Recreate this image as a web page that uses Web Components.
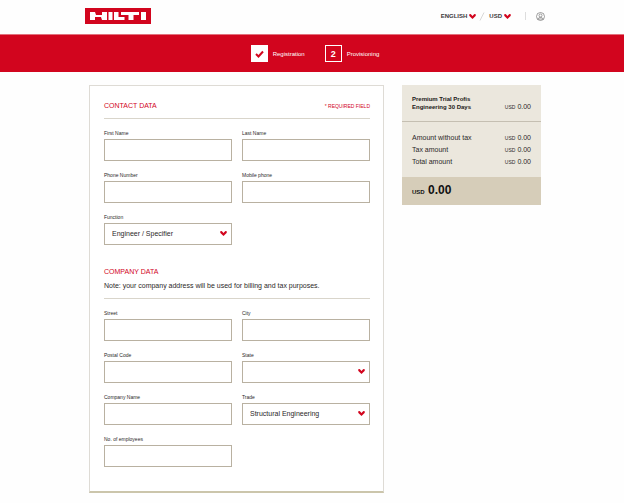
<!DOCTYPE html>
<html lang="en">
<head>
<meta charset="utf-8">
<title>Hilti – Registration</title>
<style>
html{background:#fefefe}
body{margin:0;font-family:"Liberation Sans",Arial,sans-serif;font-size:7px;line-height:12px;color:#2b2829}
</style>
</head>
<body>
<registration-page></registration-page>
<script>
const define = (name, html, setup) => customElements.define(name, class extends HTMLElement {
  connectedCallback() {
    if (this.shadowRoot) return;
    const t = document.createElement('template');
    t.innerHTML = html;
    this.attachShadow({mode: 'open'}).append(t.content.cloneNode(true));
    if (setup) setup(this, this.shadowRoot);
  }
});

define('chevron-icon', `<style>:host{display:block;width:7px;height:5px}svg{display:block;width:100%;height:100%}</style>
<svg viewBox="0 0 14 10" aria-hidden="true"><path d="M0 1.2 3.4 0 7 3.8 10.6 0 14 1.2 13.2 4 7 10 .8 4Z" fill="#d2051e"/></svg>`);

define('brand-logo', `<style>:host{display:block}a{display:block}svg{display:block;width:66px;height:16px}</style>
<a href="#" aria-label="Hilti"><svg viewBox="0 0 66 16"><path fill="#d2051e" d="M0 0h66v16H0z"/>
<path fill="#fff" d="M5 4h5l1 3h6V4h5v8h-5l-1-3h-6v3H5zM23.500 4h4v8h-4zM29 4h4.500v5h6v3H29zM36 4h18v3h-5.500v5h-5V7H36zM56 4h5v8h-5z"/></svg></a>`);

define('menu-button', `<style>:host{display:block}
button{display:flex;align-items:center;gap:2px;padding:0;border:0;background:none;font:bold 6px/12px "Liberation Sans",Arial,sans-serif;color:#3c393a}</style>
<button type="button" aria-haspopup="true"><slot></slot><chevron-icon></chevron-icon></button>`);

define('site-header', `<style>
:host{display:block;background:#fefefe}
header{display:flex;align-items:center;justify-content:space-between;height:34px;padding:0 79px 2px 85px;box-sizing:border-box}
nav{display:flex;align-items:center}
.slash{width:13px;height:9px}
.bar{width:1px;height:8px;background:#ddd;margin:0 10px 0 14px}
button{padding:0;border:0;background:none;display:block}
button svg{display:block;width:9px;height:9px}
</style>
<header><brand-logo></brand-logo>
<nav aria-label="Preferences"><menu-button>ENGLISH</menu-button>
<svg class="slash" viewBox="0 0 13 9" aria-hidden="true"><path d="M4 8.500 8 .5" stroke="#d8d8d8" fill="none"/></svg>
<menu-button>USD</menu-button><span class="bar"></span>
<button type="button" aria-label="Account"><svg viewBox="0 0 18 18" fill="none" stroke="#777" stroke-width="1.400"><circle cx="9" cy="9" r="8"/><circle cx="9" cy="7" r="3"/><path d="M4 14.500c0-5 10-5 10 0M4 14h10"/></svg></button></nav></header>`);

define('progress-step', `<style>
:host{display:flex;align-items:center;gap:5px;color:#fff;font-size:6px}
.box{display:grid;place-items:center;width:17px;height:17px;box-sizing:border-box;border:1px solid #fff;font-size:9px;font-weight:bold}
:host([done]) .box{background:#fff}
svg{display:block;width:9px;height:8px}
</style><span class="box"></span><slot></slot>`, (el, root) => {
  const box = root.querySelector('.box');
  if (el.hasAttribute('done')) box.innerHTML = '<svg viewBox="0 0 18 16" role="img" aria-label="Completed"><path d="M2 8l5 5L16 3" fill="none" stroke="#d2051e" stroke-width="4"/></svg>';
  else box.textContent = el.getAttribute('number');
});

define('progress-bar', `<style>
:host{display:flex;align-items:center;justify-content:center;gap:20px;height:37px;padding-left:6px;background:#d2051e;border-top:1px solid #e2707c}
</style><slot></slot>`);

define('form-field', `<style>
:host{display:block;min-width:0}
label{display:block;height:12px;font-size:5px;line-height:12px;color:#2b2829}
.control{position:relative}
input,select{display:block;width:100%;height:22px;box-sizing:border-box;margin:0;padding:0 7px;border:1px solid #b9b1a1;border-radius:0;background:#fff;font:7px/12px "Liberation Sans",Arial,sans-serif;color:#2b2829;appearance:none;outline:0}
chevron-icon{position:absolute;right:5px;top:8px;pointer-events:none}
</style><label for="c"></label><div class="control"></div>`, (el, root) => {
  root.querySelector('label').textContent = el.getAttribute('label');
  const box = root.querySelector('.control');
  const isSelect = el.hasAttribute('select');
  const c = document.createElement(isSelect ? 'select' : 'input');
  c.id = 'c';
  if (isSelect) {
    c.add(new Option(el.getAttribute('value') || ''));
    box.append(c, document.createElement('chevron-icon'));
  } else { c.type = 'text'; box.append(c); }
});

define('form-section', `<style>
:host{display:block}
.head{display:flex;justify-content:space-between;align-items:center}
h2{margin:0;font-size:7px;line-height:12px;font-weight:normal;color:#d2051e}
.head ::slotted(*){font-size:5px;color:#d2051e}
.note ::slotted(p){margin:2px 0 0}
.line{height:1px;background:#d9d5cb;margin:6px 0 8px}
.fields{display:grid;grid-template-columns:1fr 1fr;gap:8px 10px}
</style><div class="head"><h2></h2><slot name="hint"></slot></div><div class="note"><slot name="note"></slot></div><div class="line"></div><div class="fields"><slot></slot></div>`,
(el, root) => root.querySelector('h2').textContent = el.getAttribute('heading'));

define('form-card', `<style>
:host{display:grid;gap:21px;padding:14px 13px 24px 14px;background:#fff;border:1px solid #dedbd5;border-bottom:2px solid #cbc5ab}
</style><slot></slot>`);

define('money-amount', `<style>:host{display:block;white-space:nowrap}small{font-size:5px}
:host([large]){font-size:12px;font-weight:bold;color:#111}:host([large]) small{font-size:6px}</style><small>USD</small> <slot></slot>`);

define('order-summary', `<style>
:host{display:block;background:#ebe7dd}
.row{display:flex;justify-content:space-between;align-items:center}
.product{align-items:flex-end;padding:10px 10px 8px;border-bottom:1px solid #c5bfb2;min-height:18px}
h2{margin:0;padding-bottom:2px;font-size:6px;line-height:8px;color:#1b1919}
.amounts{padding:10px 10px 9px}
.total{padding:7px 10px}
.total{background:#d6cdb9}
</style>
<div class="row product"><h2>Premium Trial Profis<br>Engineering 30 Days</h2><money-amount>0.00</money-amount></div>
<div class="amounts"><div class="row"><span>Amount without tax</span><money-amount>0.00</money-amount></div>
<div class="row"><span>Tax amount</span><money-amount>0.00</money-amount></div>
<div class="row"><span>Total amount</span><money-amount>0.00</money-amount></div></div>
<div class="total"><money-amount large>0.00</money-amount></div>`);

define('registration-page', `<style>
:host{display:block}
main{display:grid;grid-template-columns:295fr 139fr;gap:18px;align-items:start;padding:13px 83px 10px 89px}
</style>
<site-header></site-header>
<progress-bar><progress-step done>Registration</progress-step><progress-step number="2">Provisioning</progress-step></progress-bar>
<main>
<form-card>
<form-section heading="CONTACT DATA"><span slot="hint">* REQUIRED FIELD</span>
<form-field label="First Name"></form-field><form-field label="Last Name"></form-field>
<form-field label="Phone Number"></form-field><form-field label="Mobile phone"></form-field>
<form-field label="Function" select value="Engineer / Specifier"></form-field></form-section>
<form-section heading="COMPANY DATA"><p slot="note">Note: your company address will be used for billing and tax purposes.</p>
<form-field label="Street"></form-field><form-field label="City"></form-field>
<form-field label="Postal Code"></form-field><form-field label="State" select></form-field>
<form-field label="Company Name"></form-field><form-field label="Trade" select value="Structural Engineering"></form-field>
<form-field label="No. of employees"></form-field></form-section>
</form-card>
<order-summary></order-summary>
</main>`);
</script>
</body>
</html>
